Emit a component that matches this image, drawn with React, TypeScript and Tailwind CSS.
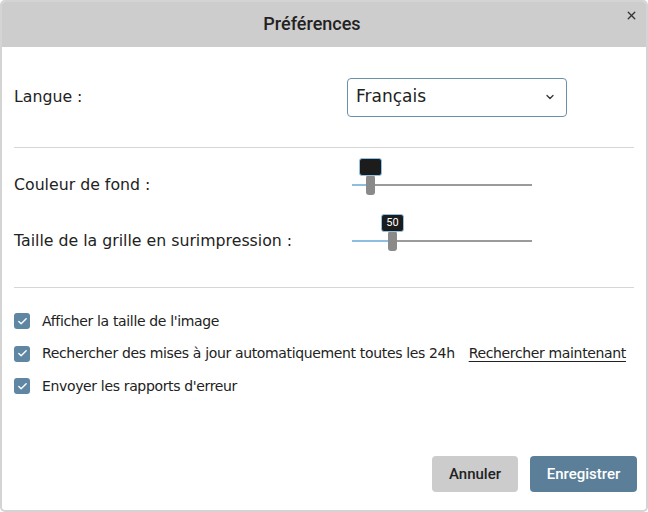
import { ChevronDown, X, Check } from 'lucide-react';

const body = { fontFamily: '"DejaVu Sans", "Noto Sans", sans-serif' };
const roboto = { fontFamily: 'Roboto, "Noto Sans", sans-serif' };

function Slider({ pos, label }: { pos: number; label?: string }) {
  return (
    <div className="relative w-[180px] h-[20px]">
      <div className="absolute left-0 right-0 top-[9px] h-[2px] bg-[#9b9b9b]" />
      <div className="absolute left-0 top-[9px] h-[2px] bg-[#8dbde0]" style={{ width: pos }} />
      <div
        className="absolute top-0 w-[9px] h-[20px] rounded-[3px] bg-[#8a8a8a]"
        style={{ left: pos - 4 }}
      />
      <div
        className="absolute top-[-17px] w-[23px] h-[18px] rounded-[3px] border border-[#8fc2e4] bg-[#1c1c1c] text-white text-[11px] leading-[16px] text-center"
        style={{ left: pos - 11, ...roboto }}
      >
        {label}
      </div>
    </div>
  );
}

function CheckRow({ children }: { children: React.ReactNode }) {
  return (
    <div className="flex items-center h-[20px]">
      <span className="w-[16px] h-[16px] rounded-[3px] bg-[#5f87a3] flex items-center justify-center">
        <Check size={11} strokeWidth={3} className="text-white" />
      </span>
      <span className="ml-[12px] text-[14px] tracking-[-0.35px] text-[#222] whitespace-nowrap">{children}</span>
    </div>
  );
}

export default function App() {
  return (
    <div className="w-[648px] h-[512px] bg-white" style={body}>
      <div className="w-full h-full flex flex-col border-2 border-[#d4d4d4] rounded-[5px] overflow-hidden">
        <div className="relative h-[47px] shrink-0 bg-[#cdcdcd] flex items-center justify-center pr-[24px] -mx-[2px] -mt-[2px]">
          <span className="text-[18px] font-medium text-[#222]" style={roboto}>Préférences</span>
          <X size={13} strokeWidth={2.5} className="absolute right-[10px] top-[9px] text-[#333]" />
        </div>

        <div className="flex-1 flex flex-col px-[12px]">
          <div className="flex items-center h-[100px]">
            <span className="w-[333px] text-[15.75px] text-[#222]">Langue :</span>
            <div className="w-[220px] h-[39px] border border-[#6b90aa] rounded-[4px] flex items-center justify-between pl-[8px] pr-[10px]">
              <span className="text-[17px] text-[#222]">Français</span>
              <ChevronDown size={12} strokeWidth={2.5} className="text-[#333]" />
            </div>
          </div>

          <div className="h-[1px] bg-[#d6d6d6]" />

          <div className="flex items-center h-[72px] pt-[1px]">
            <span className="w-[338px] text-[15.75px] text-[#222]">Couleur de fond :</span>
            <Slider pos={18} />
          </div>
          <div className="flex items-center h-[40px] mt-[1px]">
            <span className="w-[338px] text-[15.75px] text-[#222]">Taille de la grille en surimpression :</span>
            <Slider pos={40} label="50" />
          </div>

          <div className="h-[1px] bg-[#d6d6d6] mt-[26px]" />

          <div className="flex flex-col gap-[12.5px] pt-[23px]">
            <CheckRow>Afficher la taille de l'image</CheckRow>
            <CheckRow>
              Rechercher des mises à jour automatiquement toutes les 24h
              <span className="ml-[14px] underline underline-offset-[3px]">Rechercher maintenant</span>
            </CheckRow>
            <CheckRow>Envoyer les rapports d'erreur</CheckRow>
          </div>

          <div className="flex-1" />

          <div className="flex justify-end gap-[12px] pb-[18px] -mr-[3px]">
            <button
              className="w-[86px] h-[36px] rounded-[4px] bg-[#cccccc] text-[15px] font-medium text-[#222]"
              style={roboto}
            >
              Annuler
            </button>
            <button
              className="w-[107px] h-[36px] rounded-[4px] bg-[#5b7f99] text-[15px] font-medium text-white"
              style={roboto}
            >
              Enregistrer
            </button>
          </div>
        </div>
      </div>
    </div>
  );
}
